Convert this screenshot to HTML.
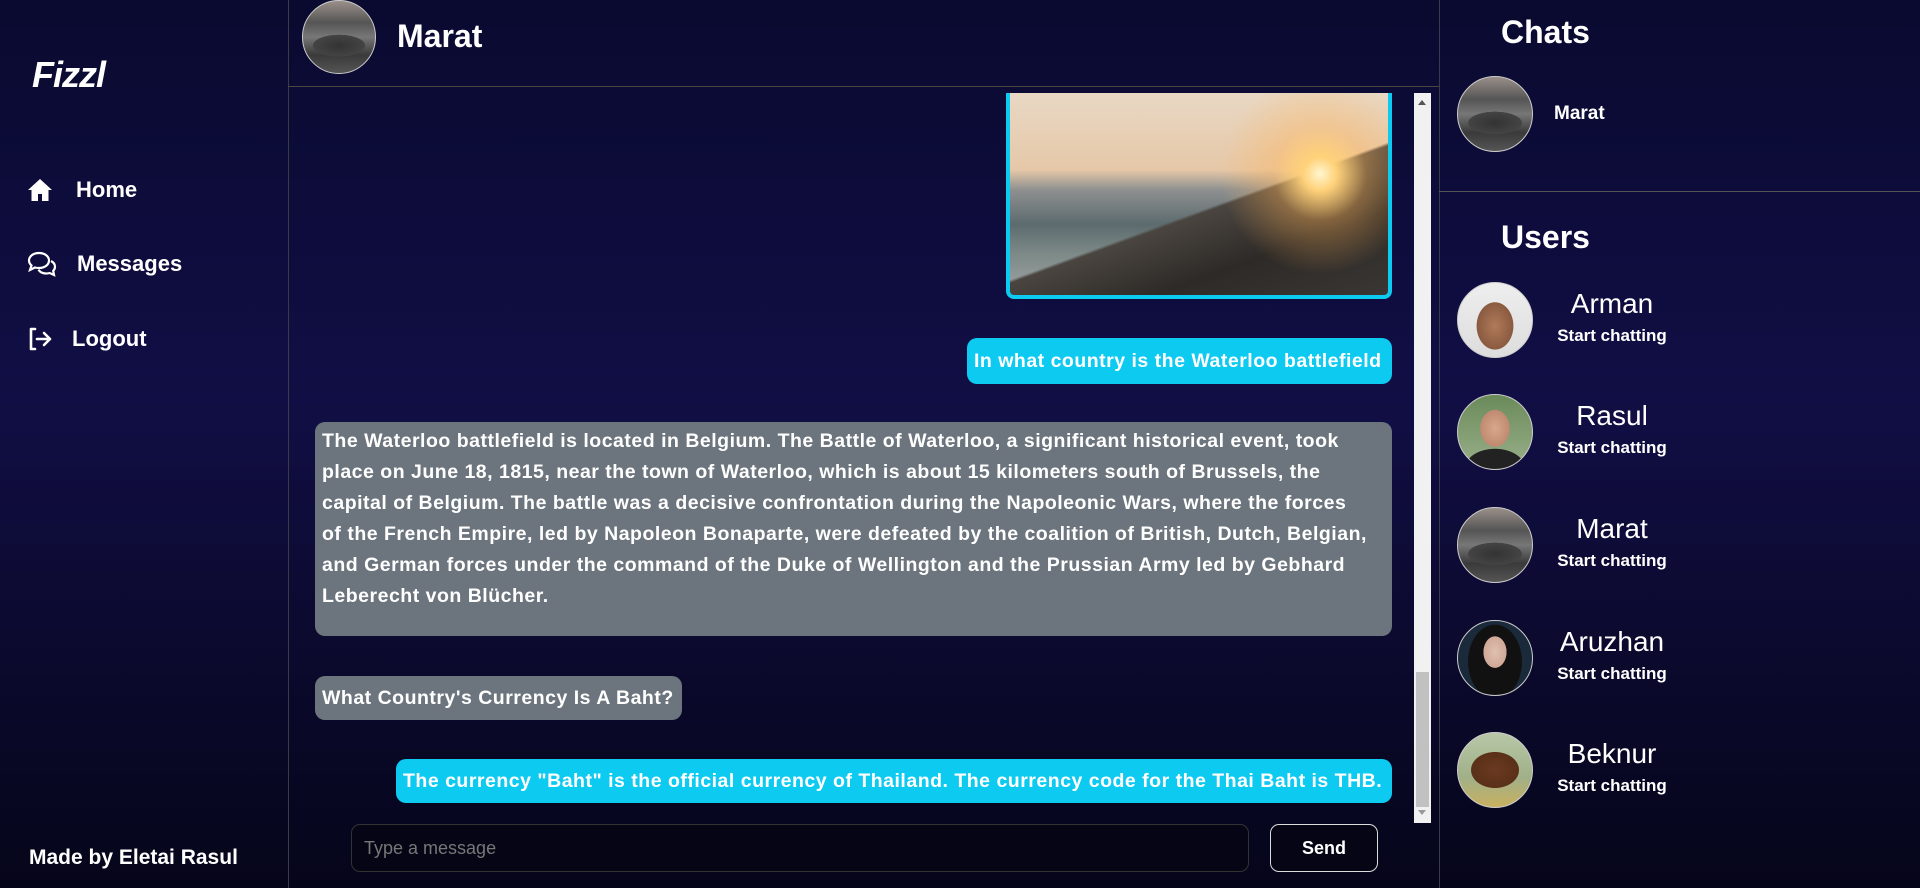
<!DOCTYPE html>
<html><head><meta charset="utf-8"><style>
*{box-sizing:border-box;margin:0;padding:0}
body{width:1920px;height:888px;overflow:hidden;font-family:"Liberation Sans",sans-serif;color:#fff;
background:linear-gradient(180deg,#0a0a30 0%,#110e45 45%,#0c0a30 70%,#05051a 100%);position:relative}
.abs{position:absolute}
.vl{position:absolute;top:0;bottom:0;width:1px;background:#3a3a48}
.nav{position:absolute;left:27px;font-size:22px;font-weight:bold;display:flex;align-items:center}
.av{position:absolute;border-radius:50%;border:1px solid #ccc;overflow:hidden}
.car{background:radial-gradient(ellipse 60% 25% at 50% 62%,#333 0,#444 60%,transparent 61%),linear-gradient(180deg,#9a8f8a 0%,#555 30%,#777 50%,#3a3a3a 75%,#555 100%)}
.bub{position:absolute;border-radius:10px;font-size:19.5px;font-weight:bold;line-height:31px;padding:0 7px;white-space:nowrap;letter-spacing:.5px}
.cy{background:#0dcaf0}.gr{background:#6c757d}
.un{position:absolute;left:1546px;width:132px;text-align:center}
.un b{display:block;font-size:28px;font-weight:normal}
.un span{display:block;font-size:17px;font-weight:bold;margin-top:6px;white-space:nowrap}
</style></head><body>
<div class="vl" style="left:288px"></div>
<div class="vl" style="left:1439px"></div>
<div class="abs" style="left:288px;top:86px;width:1151px;height:1px;background:#4a4740"></div>
<div class="abs" style="left:1439px;top:191px;width:481px;height:1px;background:#555"></div>

<div class="abs" style="left:32px;top:54px;font-size:36px;font-style:italic;font-weight:bold;letter-spacing:-1px">Fizzl</div>
<div class="nav" style="top:177px"><svg width="26" height="24" viewBox="0 0 26 24"><path d="M13 1L1 12h3.5v11h6.5v-7h4v7h6.5V12H25z" fill="#fff"/></svg><span style="margin-left:23px">Home</span></div>
<div class="nav" style="top:251px"><svg width="30" height="26" viewBox="0 0 30 26" fill="none" stroke="#fff" stroke-width="2.2"><path d="M12 2C6 2 2 5.5 2 9.5c0 2 1 3.7 2.5 5L3 19l5-2.5c1.2.4 2.5.5 4 .5 6 0 10-3.5 10-7.5S18 2 12 2z"/><path d="M24 10c2.5 1.3 4 3.4 4 5.8 0 1.6-.7 3-1.8 4.2L27 24l-4.3-2c-1 .3-2.2.5-3.4.5-3.5 0-6.5-1.5-7.8-3.8"/></svg><span style="margin-left:20px">Messages</span></div>
<div class="nav" style="top:326px"><svg width="26" height="26" viewBox="0 0 26 26" fill="none" stroke="#fff" stroke-width="2.6" stroke-linecap="round" stroke-linejoin="round"><path d="M8 3H4v20h4"/><path d="M10 13h13M17 7l6 6-6 6"/></svg><span style="margin-left:19px">Logout</span></div>
<div class="abs" style="left:29px;top:846px;font-size:21px;font-weight:bold">Made by Eletai Rasul</div>

<div class="av car" style="left:302px;top:0;width:74px;height:74px"></div>
<div class="abs" style="left:397px;top:18px;font-size:32px;font-weight:bold">Marat</div>

<div class="abs" style="left:1006px;top:93px;width:386px;height:206px;border:4px solid #0dcaf0;border-top:none;border-radius:0 0 8px 8px;background:
radial-gradient(circle at 82% 40%,#fff6d0 0,#ffd27a 5%,rgba(255,180,90,.4) 14%,transparent 30%),
linear-gradient(160deg,transparent 55%,#4a4540 56%,#2e2a27 75%,#3a3633 100%),
linear-gradient(180deg,#e8d8c4 0%,#e6c8a8 38%,#8e9090 48%,#5d6b6e 65%,#7d8a88 80%,#a0a6a4 100%)"></div>

<div class="bub cy" style="left:967px;top:338px;width:425px;height:46px;line-height:46px">In what country is the Waterloo battlefield</div>
<div class="bub gr" style="left:315px;top:422px;width:1077px;height:214px;padding-top:4px">The Waterloo battlefield is located in Belgium. The Battle of Waterloo, a significant historical event, took<br>place on June 18, 1815, near the town of Waterloo, which is about 15 kilometers south of Brussels, the<br>capital of Belgium. The battle was a decisive confrontation during the Napoleonic Wars, where the forces<br>of the French Empire, led by Napoleon Bonaparte, were defeated by the coalition of British, Dutch, Belgian,<br>and German forces under the command of the Duke of Wellington and the Prussian Army led by Gebhard<br>Leberecht von Blücher.</div>
<div class="bub gr" style="left:315px;top:676px;width:367px;height:44px;line-height:44px">What Country's Currency Is A Baht?</div>
<div class="bub cy" style="left:396px;top:759px;width:996px;height:44px;line-height:44px">The currency "Baht" is the official currency of Thailand. The currency code for the Thai Baht is THB.</div>

<div class="abs" style="left:1414px;top:93px;width:17px;height:730px;background:#f1f1f1"></div>
<div class="abs" style="left:1416px;top:672px;width:13px;height:135px;background:#c1c1c1"></div>
<div class="abs" style="left:1418px;top:100px;border:4px solid transparent;border-bottom:5px solid #555;border-top:0"></div>
<div class="abs" style="left:1418px;top:810px;border:4px solid transparent;border-top:5px solid #999;border-bottom:0"></div>

<div class="abs" style="left:351px;top:824px;width:898px;height:48px;border:1px solid #333;border-radius:9px;background:#050516;color:#777;font-size:18px;line-height:46px;padding-left:12px">Type a message</div>
<div class="abs" style="left:1270px;top:824px;width:108px;height:48px;border:1px solid #ddd;border-radius:9px;background:#050516;font-size:18px;font-weight:bold;line-height:46px;text-align:center">Send</div>

<div class="abs" style="left:1501px;top:14px;font-size:32px;font-weight:bold">Chats</div>
<div class="av car" style="left:1457px;top:76px;width:76px;height:76px"></div>
<div class="abs" style="left:1554px;top:103px;font-size:19px;font-weight:bold">Marat</div>
<div class="abs" style="left:1501px;top:219px;font-size:32px;font-weight:bold">Users</div>

<div class="av" style="left:1457px;top:282px;width:76px;height:76px;background:radial-gradient(ellipse 35% 45% at 50% 58%,#b07a5a 0,#8a5a40 70%,transparent 72%),linear-gradient(#eee,#ddd)"></div>
<div class="un" style="top:288px"><b>Arman</b><span>Start chatting</span></div>
<div class="av" style="left:1457px;top:394px;width:76px;height:76px;background:radial-gradient(ellipse 28% 35% at 50% 45%,#d8a88a 0,#c08a70 70%,transparent 72%),radial-gradient(ellipse 45% 30% at 50% 100%,#222 0,#222 90%,transparent 92%),linear-gradient(#6a8a5a,#9ab08a)"></div>
<div class="un" style="top:400px"><b>Rasul</b><span>Start chatting</span></div>
<div class="av car" style="left:1457px;top:507px;width:76px;height:76px"></div>
<div class="un" style="top:513px"><b>Marat</b><span>Start chatting</span></div>
<div class="av" style="left:1457px;top:620px;width:76px;height:76px;background:radial-gradient(ellipse 22% 30% at 50% 42%,#e0c0b0 0,#d0a898 70%,transparent 72%),radial-gradient(ellipse 40% 55% at 50% 55%,#111 0,#111 90%,transparent 92%),#1a2a3a"></div>
<div class="un" style="top:626px"><b>Aruzhan</b><span>Start chatting</span></div>
<div class="av" style="left:1457px;top:732px;width:76px;height:76px;background:radial-gradient(ellipse 40% 30% at 50% 50%,#6a3a20 0,#5a3018 80%,transparent 82%),linear-gradient(#b8c8a8 0%,#a0b088 60%,#c8b060 100%)"></div>
<div class="un" style="top:738px"><b>Beknur</b><span>Start chatting</span></div>
</body></html>
